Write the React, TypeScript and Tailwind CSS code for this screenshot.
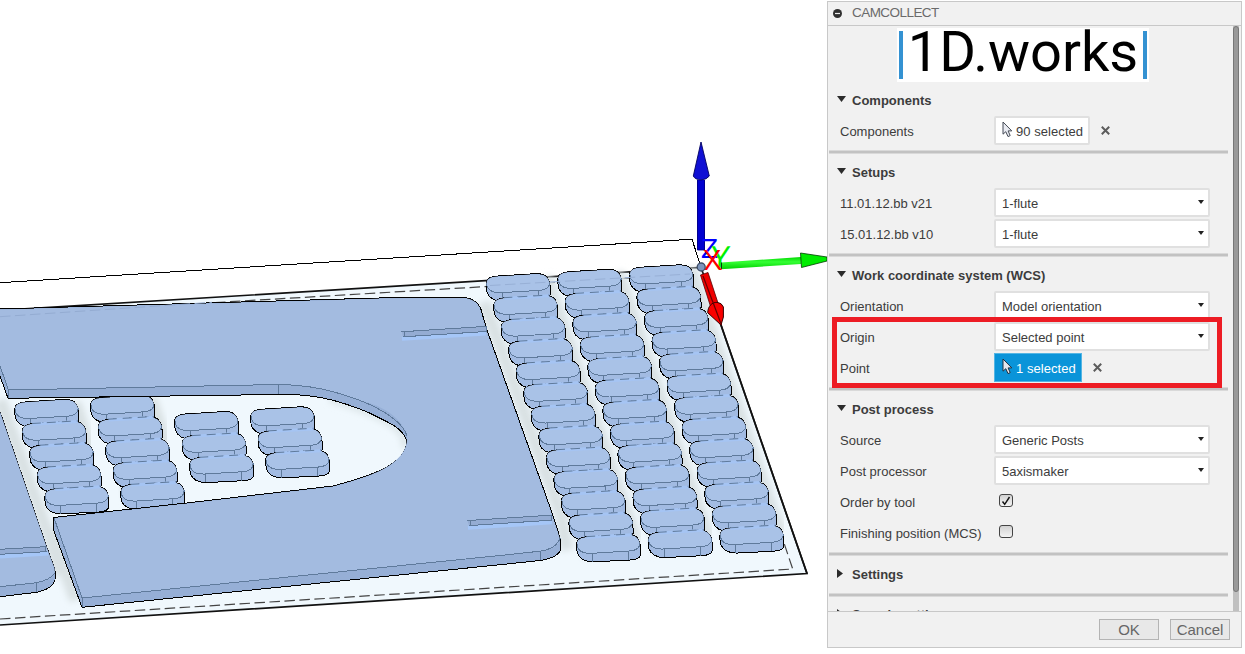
import type { ReactNode } from "react";

const EDGE = "#5f7a9b";

function Pill({ x, y, stacked }: { x: number; y: number; stacked: boolean }) {
  return (
    <g transform={`translate(${x} ${y})`}>
      <path
        d="M0.3 12C0 6 3 3.2 12 2.5L49 0.2C59 -0.3 62 3 63.6 8.5Q64.6 11 64.4 21C63.5 24.5 60 25.3 55 25.8L18 27.7C8 28 3 24 1 18.5Z"
        fill="#a2bbe2"
        stroke="#000"
        strokeWidth="1"
        shapeRendering="crispEdges"
      />
      <path
        d="M0.8 9.5C1 4.8 5 3.4 12 3L49 0.8C59 0.4 62 3.5 63.6 8.5C64.2 13 61 16.3 53 16.9L15 19.2C6 19.4 1 16 0.8 9.5Z"
        fill="#a9c2e7"
      />
      {stacked && (
        <>
          <path d="M11 3.2L56 0.5" stroke="#a5c4f3" strokeWidth="3" />
          <path d="M10 2.5L56 -0.2" stroke={EDGE} strokeWidth="1" strokeDasharray="9 6" />
        </>
      )}
      <path
        d="M0.8 9.5C1 16 6 19.4 15 19.2L53 16.9C61 16.3 64.2 13 63.8 8.5M16.3 19V27.5M52.3 17V25.7"
        fill="none"
        stroke={EDGE}
        strokeWidth="1"
        shapeRendering="crispEdges"
      />
    </g>
  );
}

function PillColumn({ x, y, count }: { x: number; y: number; count: number }) {
  return (
    <g>
      <path
        d={`M${x + 37} ${y + 11}L${x + 37 + (count - 1) * 7.53} ${y + 15 + (count - 1) * 21.72}`}
        stroke="#d9e1e3"
        strokeWidth="62"
        filter="url(#soft)"
      />
      {Array.from({ length: count }, (_, i) => (
        <Pill key={i} x={x + i * 7.53} y={y + i * 21.72} stacked={i > 0} />
      ))}
    </g>
  );
}

function Scene() {
  return (
    <svg className="block h-[654px] w-[827px] shrink-0" viewBox="0 0 827 654" fontFamily="Liberation Sans, sans-serif">
      <defs>
        <filter id="soft" x="-30%" y="-30%" width="160%" height="160%">
          <feGaussianBlur stdDeviation="3" />
        </filter>
        <linearGradient id="green" x1="0" y1="0" x2="0" y2="1">
          <stop offset="0" stopColor="#00d800" />
          <stop offset="0.4" stopColor="#35ff35" />
          <stop offset="1" stopColor="#00d000" />
        </linearGradient>
        <clipPath id="sheet">
          <path d="M0 310L701 267L807 573.5L0 625Z" />
        </clipPath>
      </defs>

      <path d="M0 310.4L701 267.5L807 573.5L0 625Z" fill="#f0f8fd" />
      <path d="M0 310.4L701 267.5L807 573.5L0 625" fill="none" stroke="#111" strokeWidth="1.7" />
      <path d="M0 282.7L692 239.2L700 264" fill="none" stroke="#000" shapeRendering="crispEdges" />
      <path d="M215 302.6L690 274.5M0 619L792.7 569L784 543" fill="none" stroke="#444" strokeWidth="1.2" strokeDasharray="10.5 4.5" />

      <g clipPath="url(#sheet)">
        <path d="M0 400L50 540L60 575M484 302L560 512L567 550M50 530L76 600" fill="none" stroke="#d9e1e3" strokeWidth="13" filter="url(#soft)" />
        <path d="M330 399C380 414 411 430 404 448" fill="none" stroke="#dce5e8" strokeWidth="7" filter="url(#soft)" />
      </g>

      <path d="M0 411.7L46.7 547L54.5 568C57 580 56 588 36.7 592.3L0 596.7" fill="#96afd6" stroke="#000" shapeRendering="crispEdges" />
      <path d="M0 411.7L46.7 547L54.5 568C56 577 49 581 36.7 582.7L0 586.7Z" fill="#a3bbe0" />
      <path d="M0 549.3L45.7 546.7V552L0 554.3Z" fill="#94acd3" />
      <path d="M0 556.5L48 553.5" stroke="#a5c6f7" strokeWidth="4" />
      <path d="M0 549.3L45.7 546.7V551.8M0 554.3L47 551.6M0 586.7L36.7 582.7Q50 580 55 573M36.5 583V592" fill="none" stroke={EDGE} shapeRendering="crispEdges" />

      <PillColumn x={14.3} y={399.3} count={5} />
      <PillColumn x={90.2} y={395} count={5} />
      <PillColumn x={174.2} y={411.4} count={3} />
      <PillColumn x={250.2} y={406.7} count={3} />

      <path
        d="M0 309L386 297.8L463 297.2C474 298.5 480 303 482 313L487 330L553.5 517L560.7 540V549C559 556 550 559 540 560.5L500 564.7L82 607.3L53.5 530V517.5L186.7 503L333 486C371 476 408 464 406.5 440C402 428 392 424 366.7 411.7C342 402 324 396 290 394.3L8 398.3L0 376"
        fill="#96afd6"
        stroke="#000"
        shapeRendering="crispEdges"
      />
      <path
        d="M0 309.8L386 298.6L463 298C474 299 479 303 481 313L486 330L552.5 517L559.7 538C559 547 550 550 540 551.2L500 555.5L82 598L54.5 518.3L186.7 503.8L333 486.8C371 476.8 409 464 407 436C401 414 376 404 360 400.5C332 390 310 385 278 384.5L8.5 390L0 366Z"
        fill="#a3bbe0"
      />
      <path
        d="M0 366L8.5 390L278 384.5C310 385 332 390 360 400.5C385 410 404 424 407 436M8.5 390V398M278.5 384.5V394M54 517.8L82 598L500 555.5L540 551.2Q556 549 560.2 538M82.5 598V607M540.5 551V560"
        fill="none"
        stroke={EDGE}
        shapeRendering="crispEdges"
      />
      <path d="M0 316.7L212 302.3" stroke="#94acd2" strokeDasharray="10.5 4.5" />

      <path d="M402 331.8L486 326.4V331.5L403 336.8Z" fill="#94acd3" />
      <path d="M402 338.8L486 333.4" stroke="#a5c6f7" strokeWidth="4" />
      <path d="M401 331.8L486 326.4V331.5L403 336.8M404 332V337" fill="none" stroke={EDGE} shapeRendering="crispEdges" />
      <path d="M467.5 520.6L551 515.2V520.2L469 525.6Z" fill="#94acd3" />
      <path d="M468 527.8L552 522.3" stroke="#a5c6f7" strokeWidth="4" />
      <path d="M467 520.6L551 515.2V520.2L469 525.6M470 521V526" fill="none" stroke={EDGE} shapeRendering="crispEdges" />

      <PillColumn x={485.8} y={273.5} count={13} />
      <PillColumn x={557.4} y={269.2} count={13} />
      <PillColumn x={629.1} y={264.7} count={13} />
      <path d="M490 285.5L690 274" stroke="#98b0d6" strokeDasharray="10.5 4.5" />
      <path d="M712 299L807 573.5" stroke="#111" strokeWidth="1.7" />

      <path d="M697 180H705V250H697Z" fill="#0000cf" />
      <path d="M697.5 180V250H704.5V180" fill="none" stroke="#000080" strokeWidth="0.8" />
      <path d="M701 142L693.3 176Q695 179.5 701 180Q707 179.5 709.3 176Z" fill="#1010d4" stroke="#000060" strokeWidth="0.9" />
      <text x="701" y="258.3" fontSize="28" fill="#0000ff">Z</text>
      <text transform="translate(709.5 269) skewX(-4)" fontSize="33" textLength="20" lengthAdjust="spacingAndGlyphs" fill="#00f000">Y</text>
      <path d="M721 262.5L801 257V264L721 269.3Z" fill="url(#green)" />
      <path d="M721.5 262.5V269.3" stroke="#043d04" />
      <path d="M800.5 253L827 257V261L801.5 267.5Z" fill="#00ec00" stroke="#003a00" strokeWidth="0.8" />
      <text transform="translate(703.5 270) skewX(3)" fontSize="29" textLength="19" lengthAdjust="spacingAndGlyphs" fill="#f00">X</text>
      <path d="M700.5 275L708 272.5L718 303L711 308Z" fill="#f00000" stroke="#500" strokeWidth="0.8" />
      <path d="M707.7 312.7C708 306 712 302.3 717 302.3Q722 303 723.4 307V317L721 325Z" fill="#f80000" stroke="#300" strokeWidth="1" />
      <path d="M703 276L721.5 325" stroke="#600" strokeWidth="1.2" />
      <circle cx="701.2" cy="267" r="4" fill="#7c95bd" stroke="#3e4d67" strokeWidth="1.3" />
    </svg>
  );
}

function Cursor({ active = false }: { active?: boolean }) {
  return (
    <svg className="mb-0.5 h-[17px] w-[11px] shrink-0" viewBox="0 0 11 17">
      <path
        d="M1 1V13.2L3.8 10.7L6 15.6L8.2 14.6L6.1 9.9H9.8Z"
        fill={active ? "#e6e8ef" : "#e9ebf2"}
        stroke={active ? "#24313f" : "#454b56"}
        strokeWidth="1"
      />
    </svg>
  );
}

function Cross() {
  return (
    <svg className="h-[9px] w-[9px]" viewBox="0 0 9 9">
      <path d="M0.8 0.8L8.2 8.2M8.2 0.8L0.8 8.2" stroke="#5c5c5c" strokeWidth="2" />
    </svg>
  );
}

function Row({ label, children }: { label: string; children?: ReactNode }) {
  return (
    <div className="flex h-[31px] items-start">
      <div className="w-[166px] shrink-0 whitespace-nowrap pl-3 leading-8">{label}</div>
      {children}
    </div>
  );
}

function Select({ value }: { value: string }) {
  return (
    <div className="flex h-[29px] w-[216px] items-center justify-between rounded-[2px] border-2 border-[#e0e0e0] bg-white pl-1.5 pr-1">
      <span className="pt-[3px]">{value}</span>
      <svg className="mb-0.5 h-1 w-1.5" viewBox="0 0 6 4">
        <path d="M0 0H6L3 4Z" fill="#222" />
      </svg>
    </div>
  );
}

function Selection({ text, active = false }: { text: string; active?: boolean }) {
  return (
    <div className="flex items-center">
      <div
        className={
          active
            ? "flex h-[29px] w-[88px] items-center gap-[3px] border border-[#53b5e4] bg-[#0a94d9] pl-[7px] text-white"
            : "flex h-[29px] w-[96px] items-center gap-[3px] rounded-[2px] border-2 border-[#e0e0e0] bg-white pl-1.5"
        }
      >
        <Cursor active={active} />
        <span className="whitespace-nowrap pt-[3px] tracking-[0.06px]">{text}</span>
      </div>
      <div className="ml-[11px] flex pb-px">
        <Cross />
      </div>
    </div>
  );
}

function Checkbox({ checked = false }: { checked?: boolean }) {
  return (
    <div className="ml-[5px] mt-[7px] flex h-[13px] w-[14px] items-center justify-center rounded-[3px] border border-[#444] bg-linear-to-b from-[#d2d2d2] to-[#f4f4f4]">
      {checked && (
        <svg className="size-3" viewBox="0 0 12 12">
          <path d="M2.5 6.5L4.7 9.3L9.5 2" fill="none" stroke="#111" strokeWidth="1.4" />
        </svg>
      )}
    </div>
  );
}

function Section({ title, open = false, children }: { title: string; open?: boolean; children?: ReactNode }) {
  return (
    <section>
      <div className="flex h-[31px] items-center font-bold">
        <div className="flex w-6 pb-[3px] pl-[9px]">
          {open ? (
            <svg className="h-1.5 w-[9px]" viewBox="0 0 9 6">
              <path d="M0 0H9L4.5 6Z" fill="#2b2b2b" />
            </svg>
          ) : (
            <svg className="h-[9px] w-1.5" viewBox="0 0 6 9">
              <path d="M0 0L6 4.5L0 9Z" fill="#2b2b2b" />
            </svg>
          )}
        </div>
        <span>{title}</span>
      </div>
      {children}
      <div className="my-[3px] ml-px h-1 w-[399px] border-y border-[#d9d9d9] bg-[#c2c2c2]" />
    </section>
  );
}

export default function App() {
  return (
    <div className="flex h-[654px] w-[1245px] overflow-hidden bg-white font-['Liberation_Sans',Arial,sans-serif]">
      <Scene />
      <div className="relative mt-px flex h-[647px] w-[415px] flex-col border border-[#c8c8c8] bg-[#f1f1f1] text-[13px] text-[#3c3c3c]">
        <header className="flex h-6 shrink-0 items-center border-b border-[#c8c8c8] pl-[5px] text-[13.5px] text-[#6a6a6a]">
          <svg className="mr-2.5 size-[9px]" viewBox="0 0 9 9">
            <circle cx="4.5" cy="4.5" r="4.5" fill="#303030" />
            <path d="M2 4.5H7" stroke="#eee" strokeWidth="1.2" />
          </svg>
          <span className="tracking-[-0.55px]">CAMCOLLECT</span>
        </header>
        <div className="flex h-[585px] shrink-0 overflow-hidden">
          <div className="w-[405px] shrink-0">
            <div className="ml-[69px] mt-0.5 flex h-[54px] w-[252px] justify-between bg-white px-0.5 py-[3px] text-black">
              <div className="w-1 bg-[#3492d2]" />
              <div className="whitespace-nowrap font-['Roboto'] text-[56px] leading-[42px]">1D.works</div>
              <div className="w-1 bg-[#3492d2]" />
            </div>
            <div className="h-[3px]" />
            <Section title="Components" open>
              <Row label="Components">
                <Selection text="90 selected" />
              </Row>
            </Section>
            <Section title="Setups" open>
              <Row label="11.01.12.bb v21">
                <Select value="1-flute" />
              </Row>
              <Row label="15.01.12.bb v10">
                <Select value="1-flute" />
              </Row>
            </Section>
            <Section title="Work coordinate system (WCS)" open>
              <Row label="Orientation">
                <Select value="Model orientation" />
              </Row>
              <Row label="Origin">
                <Select value="Selected point" />
              </Row>
              <Row label="Point">
                <Selection text="1 selected" active />
              </Row>
            </Section>
            <Section title="Post process" open>
              <Row label="Source">
                <Select value="Generic Posts" />
              </Row>
              <Row label="Post processor">
                <Select value="5axismaker" />
              </Row>
              <Row label="Order by tool">
                <Checkbox checked />
              </Row>
              <Row label="Finishing position (MCS)">
                <Checkbox />
              </Row>
            </Section>
            <Section title="Settings" />
            <div className="-mt-px">
              <Section title="Sample settings" />
            </div>
          </div>
          <div className="h-full w-1.5 bg-[#c0c0c0]">
            <div className="h-[566px] w-1.5 rounded-full border border-[#777] bg-[#999]" />
          </div>
        </div>
        <footer className="flex flex-1 items-start gap-[11px] border-t border-[#c8c8c8] pl-[271px] pt-[7px] text-[15px] text-[#666]">
          <button className="h-[21px] w-[60px] border border-[#b4b4b4] bg-[#e8e8e8] leading-[19px]">OK</button>
          <button className="h-[21px] w-[60px] border border-[#b4b4b4] bg-[#e8e8e8] leading-[19px]">Cancel</button>
        </footer>
        <div className="absolute left-[4px] top-[315px] h-[71px] w-[390px] border-[5px] border-[#ed1c24]" />
      </div>
    </div>
  );
}
